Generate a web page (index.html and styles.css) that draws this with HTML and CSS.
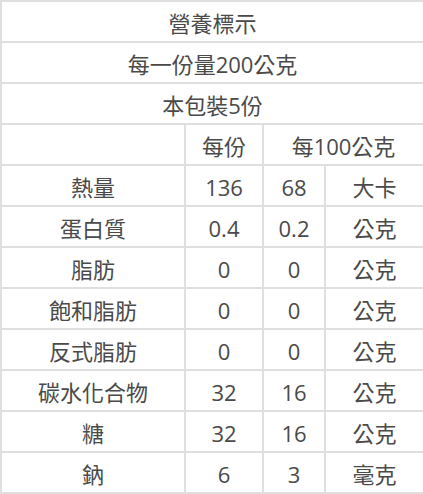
FILE: index.html
```html
<!DOCTYPE html>
<html lang="zh-Hant">
<head>
<meta charset="utf-8">
<title>營養標示</title>
<link rel="stylesheet" href="styles.css">
</head>
<body>
<table class="nutrition">
  <colgroup>
    <col class="c1"><col class="c2"><col class="c3"><col class="c4">
  </colgroup>
  <tbody>
    <tr><td colspan="4">營養標示</td></tr>
    <tr><td colspan="4">每一份量200公克</td></tr>
    <tr><td colspan="4">本包裝5份</td></tr>
    <tr><td></td><td>每份</td><td colspan="2">每100公克</td></tr>
    <tr><td>熱量</td><td>136</td><td>68</td><td>大卡</td></tr>
    <tr><td>蛋白質</td><td>0.4</td><td>0.2</td><td>公克</td></tr>
    <tr><td>脂肪</td><td>0</td><td>0</td><td>公克</td></tr>
    <tr><td>飽和脂肪</td><td>0</td><td>0</td><td>公克</td></tr>
    <tr><td>反式脂肪</td><td>0</td><td>0</td><td>公克</td></tr>
    <tr><td>碳水化合物</td><td>32</td><td>16</td><td>公克</td></tr>
    <tr><td>糖</td><td>32</td><td>16</td><td>公克</td></tr>
    <tr><td>鈉</td><td>6</td><td>3</td><td>毫克</td></tr>
  </tbody>
</table>
</body>
</html>
```

FILE: styles.css
```css
html, body {
  margin: 0;
  padding: 0;
  background: #ffffff;
}

.nutrition {
  width: 423px;
  border-collapse: collapse;
  table-layout: fixed;
  font-family: "Open Sans", "Noto Sans CJK TC", sans-serif;
  font-size: 22px;
  color: #4a4a4a;
  border: 2px solid #dfdfdf;
}

.nutrition .c1 { width: 184px; }
.nutrition .c2 { width: 78px; }
.nutrition .c3 { width: 62px; }
.nutrition .c4 { width: 99px; }

.nutrition td {
  border: 2px solid #dfdfdf;
  height: 37px;
  padding: 2px 0 0;
  text-align: center;
  vertical-align: middle;
  line-height: 1;
  white-space: nowrap;
}
```
